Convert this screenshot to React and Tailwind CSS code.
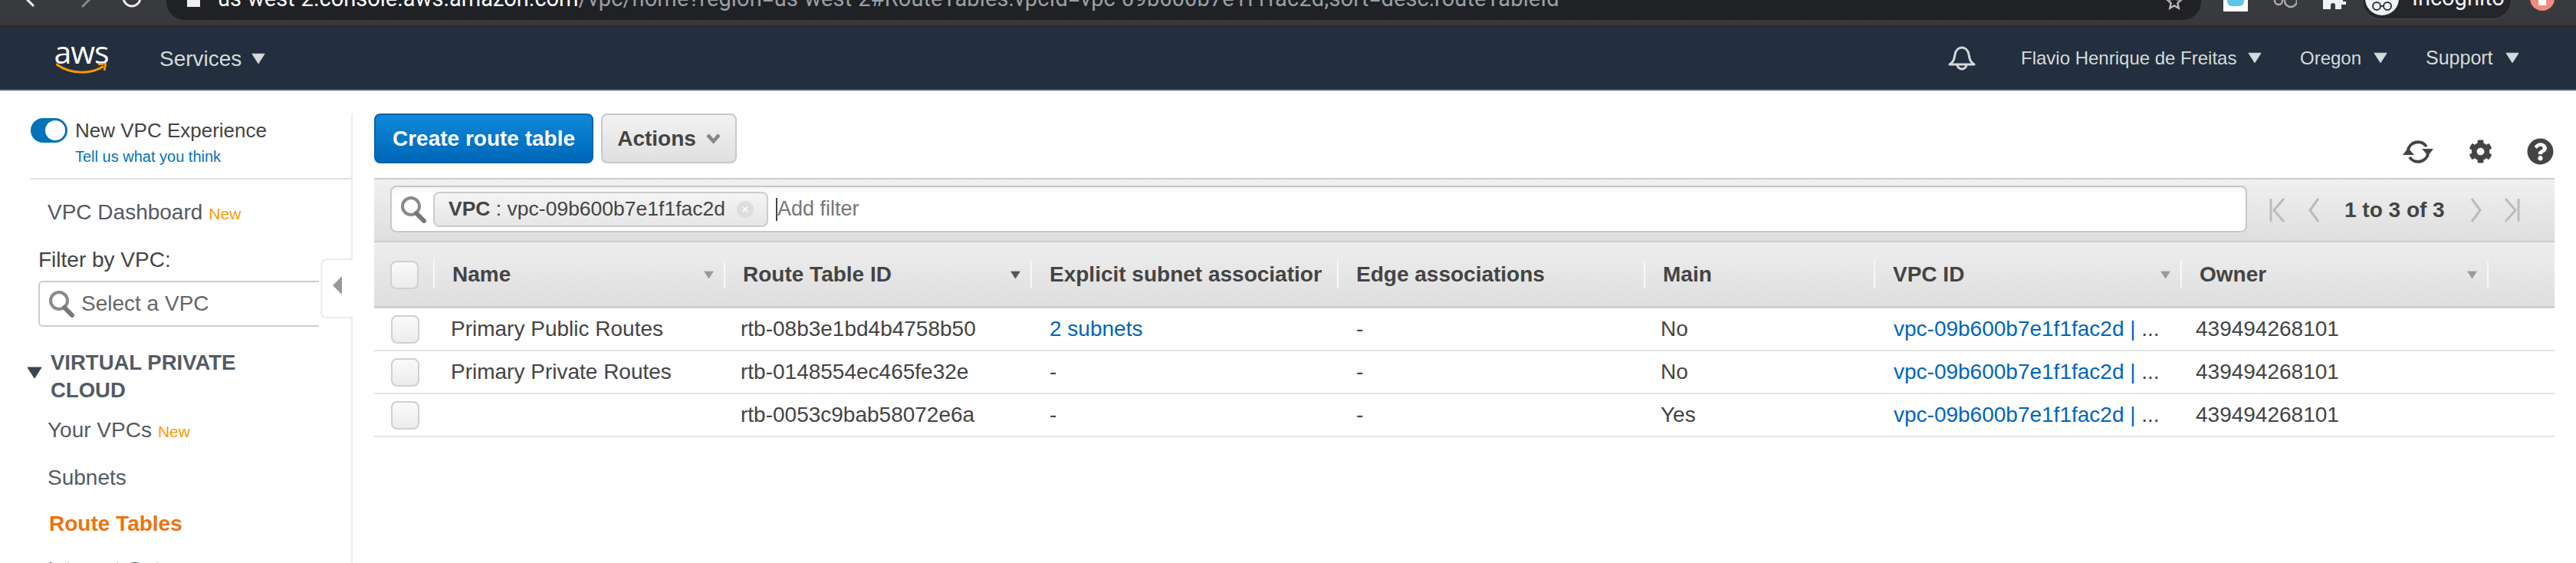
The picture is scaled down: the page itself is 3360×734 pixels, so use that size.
import React from 'react';
import { FaCog, FaQuestionCircle } from 'react-icons/fa';

const gridCols = 'grid grid-cols-[79px_379px_400px_400px_400px_300px_400px_400px_1fr]';

const Caret = ({ className }) => (
  <svg viewBox="0 0 20 16" className={className}>
    <path d="M1 1h18L10 15z" fill="currentColor" stroke="currentColor" strokeLinejoin="round" />
  </svg>
);

const SearchIcon = ({ className }) => (
  <svg viewBox="0 0 36 36" className={className} fill="none">
    <circle cx="15" cy="14" r="11" stroke="#8a8a8a" strokeWidth="4" />
    <path d="M22 23l10 10" stroke="#777" strokeWidth="6" strokeLinecap="round" />
  </svg>
);

const NewBadge = () => <span className="text-[21px] font-normal text-[#ff9900] ml-[8px]">New</span>;

const NavMenu = ({ label, textClass }) => (
  <div className="flex items-center">
    <span className={`text-[#d5dbdb] whitespace-nowrap ${textClass}`}>{label}</span>
    <Caret className="w-[18px] h-[15px] text-[#d5dbdb] ml-[16px]" />
  </div>
);

const Checkbox = ({ className }) => (
  <div className={`w-[37px] h-[37px] rounded-[8px] border-2 border-[#d0d0d0] bg-gradient-to-b from-[#fafafa] to-[#ececec] ${className}`} />
);

const HeaderCell = ({ label, sort, active }) => (
  <div className="h-[36px] border-r-2 border-[#f7f7f7] flex items-center justify-between pl-[23px] pr-[13px] overflow-hidden">
    <span className={`text-[28px] font-bold text-[#444] whitespace-nowrap overflow-hidden ${sort ? '' : 'mr-[7px]'}`}>{label}</span>
    {sort && <Caret className={`w-[13px] h-[13px] shrink-0 ml-2 ${active ? 'text-[#555]' : 'text-[#999]'}`} />}
  </div>
);

const rows = [
  { name: 'Primary Public Routes', id: 'rtb-08b3e1bd4b4758b50', subnets: '2 subnets', main: 'No' },
  { name: 'Primary Private Routes', id: 'rtb-0148554ec465fe32e', subnets: '-', main: 'No' },
  { name: '', id: 'rtb-0053c9bab58072e6a', subnets: '-', main: 'Yes' },
];

const Pager = () => (
  <div className="flex items-center w-[401px] pl-[29px]">
    <svg viewBox="0 0 21 34" className="w-[21px] h-[34px]" fill="none" stroke="#bbb" strokeWidth="3">
      <path d="M2 2v30M19 2L6 17l13 15" />
    </svg>
    <svg viewBox="0 0 16 34" className="w-[16px] h-[34px] ml-[29px]" fill="none" stroke="#bbb" strokeWidth="3">
      <path d="M14 2L3 17l11 15" />
    </svg>
    <span className="text-[28px] font-bold text-[#444] ml-[32px] w-[130px] whitespace-nowrap">1 to 3 of 3</span>
    <svg viewBox="0 0 16 34" className="w-[16px] h-[34px] ml-[34px]" fill="none" stroke="#bbb" strokeWidth="3">
      <path d="M2 2l11 15L2 32" />
    </svg>
    <svg viewBox="0 0 21 34" className="w-[21px] h-[34px] ml-[28px]" fill="none" stroke="#bbb" strokeWidth="3">
      <path d="M19 2v30M2 2l13 15L2 32" />
    </svg>
  </div>
);

export default function App() {
  return (
    <div className="h-[734px] overflow-hidden bg-white font-['Liberation_Sans',Arial,sans-serif]">
      {/* Browser chrome, cut off by the top of the shot */}
      <div className="h-[35px] overflow-hidden bg-gradient-to-b from-[#3a3b40] to-[#37383c] border-b-2 border-[#29292c] flex items-start relative">
        <svg viewBox="0 0 190 12" className="w-[190px] h-[12px] ml-[30px] shrink-0" fill="none" strokeWidth="3">
          <path d="M2 -4L14 8" stroke="#eee" />
          <path d="M77 9L90 -4" stroke="#888" />
          <circle cx="142" cy="-3" r="11" stroke="#eee" />
        </svg>
        <div className="w-[2654px] ml-[-3px] h-[26px] bg-[#202124] rounded-bl-[24px] rounded-br-[24px] flex items-end overflow-hidden relative shrink-0">
          <div className="w-[17px] h-[9px] bg-[#eee] ml-[27px] mb-[17px] shrink-0" />
          <div className="text-[29px] leading-[34px] mt-[-19px] self-start ml-[23px] whitespace-nowrap font-['Roboto',sans-serif]">
            <span className="text-white">us-west-2.console.aws.amazon.com</span>
            <span className="text-[#9aa0a6] tracking-[0.12px]">/vpc/home?region=us-west-2#RouteTables:vpcId=vpc-09b600b7e1f1fac2d;sort=desc:routeTableId</span>
          </div>
          <svg viewBox="0 0 24 24" className="w-[22px] h-[22px] absolute right-[24px] top-[-9px] text-[#bbb]" fill="none" stroke="currentColor" strokeWidth="2.5">
            <path d="M12 2l3 7 7 .6-5.300 4.700 1.600 7.200L12 17.700 5.700 21.500l1.600-7.200L2 9.600 9 9z" />
          </svg>
        </div>
        <div className="w-[32px] h-[15px] bg-white ml-[29px] shrink-0 flex justify-center">
          <div className="w-[22px] h-[8px] bg-[#5cc6e8] rounded-b-[6px]" />
        </div>
        <svg viewBox="0 0 32 12" className="w-[32px] h-[12px] ml-[32px] shrink-0" fill="none" stroke="#aaa" strokeWidth="2.500">
          <circle cx="8" cy="1" r="5" />
          <circle cx="24" cy="1" r="8" />
        </svg>
        <svg viewBox="0 0 30 12" className="w-[30px] h-[12px] ml-[34px] shrink-0" fill="#f1f3f4">
          <path d="M0 -4h26v6h4v4h-6v6H16V7a3 3 0 0 0-6 0v5H0z" />
        </svg>
        <div className="w-[195px] h-[25px] ml-[21px] shrink-0 rounded-b-[24px] bg-[#25262a] border-b border-x border-[#45464a] flex items-start overflow-hidden">
          <div className="w-[44px] h-[44px] rounded-full bg-[#f1f3f4] ml-[3px] mt-[-24px] shrink-0 flex items-end justify-center pb-[6px]">
            <svg viewBox="0 0 28 12" className="w-[28px] h-[12px]" fill="none" stroke="#333" strokeWidth="2">
              <circle cx="7" cy="6" r="5" />
              <circle cx="21" cy="6" r="5" />
              <path d="M12 6h4" />
            </svg>
          </div>
          <span className="text-[29px] leading-[34px] mt-[-20px] ml-[17px] text-[#f1f3f4] font-['Roboto',sans-serif]">Incognito</span>
        </div>
        <div className="w-[32px] h-[32px] rounded-full bg-[#f28b82] ml-[24px] mt-[-18px] shrink-0 flex justify-center">
          <div className="w-[10px] h-[21px] bg-white mt-[4px]" />
        </div>
      </div>

      {/* AWS console nav */}
      <header className="h-[83px] bg-[#232f3e] border-b-2 border-[#4b5560] flex items-center">
        <div className="w-[66px] ml-[73px] mt-[-2px] flex flex-col items-center">
          <span className="text-[41px] leading-[30px] h-[30px] text-white font-['Open_Sans',sans-serif] tracking-[-1px]">aws</span>
          <svg viewBox="0 0 66 16" className="w-[66px] h-[16px]" fill="none">
            <path d="M1 2c18 13 44 13 60 3" stroke="#ff9900" strokeWidth="3" strokeLinecap="round" />
            <path d="M55 2l10-1-2 9" stroke="#ff9900" strokeWidth="2.500" />
          </svg>
        </div>
        <div className="ml-[69px] mt-[2px]">
          <NavMenu label="Services" textClass="text-[28px] w-[104px]" />
        </div>
        <div className="ml-auto flex items-center pr-[74px]">
          <svg viewBox="0 0 36 34" className="w-[36px] h-[34px]" fill="none" stroke="#d5dbdb" strokeWidth="3" strokeLinejoin="round">
            <path d="M2 25c6-4 6-8 7-13 1-6 5-9 9-9s8 3 9 9c1 5 1 9 7 13z" />
            <path d="M12 25a6 6 0 0 0 12 0" />
          </svg>
          <div className="ml-[59px]"><NavMenu label="Flavio Henrique de Freitas" textClass="text-[24px] w-[280px]" /></div>
          <div className="ml-[50px]"><NavMenu label="Oregon" textClass="text-[24px] w-[80px]" /></div>
          <div className="ml-[50px]"><NavMenu label="Support" textClass="text-[25px] w-[88px]" /></div>
        </div>
      </header>

      <div className="flex pt-[30px]">
        {/* Sidebar */}
        <aside className="w-[460px] h-[600px] shrink-0 border-r-2 border-[#eaeded] pl-[40px] relative">
          <div className="h-[86px] border-b-2 border-[#e0e0e0]">
            <div className="flex items-center h-[44px]">
              <div className="w-[48px] h-[32px] rounded-full bg-[#0073bb] flex items-center justify-end pr-[3px]">
                <div className="w-[26px] h-[26px] rounded-full bg-white" />
              </div>
              <span className="text-[26px] text-[#444] ml-[10px]">New VPC Experience</span>
            </div>
            <a className="block text-[20px] text-[#0073bb] ml-[58px] mt-[-3px]">Tell us what you think</a>
          </div>

          <div className="text-[28px] leading-[30px] text-[#545b64] ml-[22px] mt-[28px] flex items-baseline">
            VPC Dashboard<NewBadge />
          </div>
          <div className="text-[28px] leading-[30px] text-[#444] ml-[10px] mt-[30px]">Filter by VPC:</div>
          <div className="w-[366px] h-[60px] ml-[10px] mt-[12px] border-y-2 border-l-2 border-[#ccc] rounded-l-[6px] flex items-center pl-[10px]">
            <SearchIcon className="w-[36px] h-[36px]" />
            <span className="text-[28px] text-[#666] ml-[8px]">Select a VPC</span>
          </div>

          <div className="relative mt-[29px] pl-[26px]">
            <Caret className="absolute left-[-5px] top-[21px] w-[20px] h-[20px] text-[#3b4450]" />
            <div className="text-[27.5px] leading-[36px] font-bold text-[#545b64]">
              VIRTUAL PRIVATE
              <br />
              CLOUD
            </div>
          </div>
          <div className="text-[28px] leading-[30px] text-[#545b64] ml-[22px] mt-[19px] flex items-baseline">
            Your VPCs<NewBadge />
          </div>
          <div className="text-[28px] leading-[30px] text-[#545b64] ml-[22px] mt-[30px]">Subnets</div>
          <div className="text-[28px] leading-[30px] font-bold text-[#ec7211] ml-[24px] mt-[30px]">Route Tables</div>
          <div className="text-[28px] leading-[30px] text-[#545b64] ml-[22px] mt-[30px]">Internet Gateways</div>

          {/* Collapse handle */}
          <div className="absolute left-[418px] top-[189px] w-[42px] h-[78px] bg-white border-2 border-r-0 border-[#eaeded] rounded-l-[8px] flex items-center pl-[14px] pb-[8px]">
            <svg viewBox="0 0 12 24" className="w-[12px] h-[24px]">
              <path d="M12 0v24L0 12z" fill="#999" />
            </svg>
          </div>
        </aside>

        {/* Main panel */}
        <main className="flex-1 pl-[28px] pr-[28px]">
          <div className="flex items-start h-[84px]">
            <button className="w-[286px] h-[65px] rounded-[8px] border-2 border-[#0a62a8] bg-gradient-to-b from-[#0f88d9] to-[#0067b8] text-white text-[28px] font-bold">
              Create route table
            </button>
            <button className="w-[177px] h-[65px] ml-[10px] rounded-[8px] border-2 border-[#c9c9c9] bg-gradient-to-b from-[#f2f2f2] to-[#e0e0e0] text-[#444] text-[28px] font-bold flex items-center justify-center">
              Actions
              <svg viewBox="0 0 20 14" className="w-[19px] h-[13px] ml-[13px]" fill="none" stroke="#888" strokeWidth="5">
                <path d="M2 2l8 9 8-9" />
              </svg>
            </button>
            <div className="ml-auto mr-[1px] flex items-center mt-[32px] text-[#444]">
              <svg viewBox="0 0 42 34" className="w-[42px] h-[34px]" fill="none" stroke="#444" strokeWidth="4">
                <path d="M8 15a13 12 0 0 1 24-5" />
                <path d="M34 19a13 12 0 0 1-24 5" />
                <path d="M26 13h15l-7 9z" fill="#444" stroke="none" />
                <path d="M1 21h15l-8-9z" fill="#444" stroke="none" />
              </svg>
              <FaCog className="w-[31px] h-[31px] ml-[45px]" />
              <FaQuestionCircle className="w-[35px] h-[35px] ml-[45px]" />
            </div>
          </div>

          {/* Filter bar */}
          <div className="h-[84px] border-y-2 border-[#ccc] bg-gradient-to-b from-[#f0f0f0] to-[#dedede] flex items-center pl-[21px]">
            <div className="flex-1 h-[61px] mb-[3px] rounded-[8px] border-2 border-[#c8c8c8] bg-white shadow-[inset_0_4px_6px_rgba(0,0,0,0.05)] flex items-center pl-[10px]">
              <SearchIcon className="w-[36px] h-[36px]" />
              <div className="w-[437px] h-[46px] ml-[8px] rounded-[8px] border-2 border-[#ccc] bg-gradient-to-b from-[#f4f4f4] to-[#e6e6e6] flex items-center pl-[18px]">
                <span className="text-[26.5px] text-[#444] whitespace-nowrap">
                  <b>VPC</b> : vpc-09b600b7e1f1fac2d
                </span>
                <span className="w-[22px] h-[22px] rounded-full bg-[#ddd] text-white text-[18px] leading-[22px] text-center ml-[15px] shrink-0">×</span>
              </div>
              <div className="w-[2px] h-[30px] bg-[#444] ml-[10px]" />
              <span className="text-[27px] text-[#777]">Add filter</span>
            </div>
            <Pager />
          </div>

          {/* Table */}
          <div className={`${gridCols} h-[86px] border-b-[3px] border-[#ccc] bg-gradient-to-b from-[#eeeeee] to-[#dedede] items-start pt-[24px]`}>
            <div className="h-[36px] border-r-2 border-[#f7f7f7] pl-[21px]">
              <Checkbox />
            </div>
            <HeaderCell label="Name" sort />
            <HeaderCell label="Route Table ID" sort active />
            <HeaderCell label="Explicit subnet association" />
            <HeaderCell label="Edge associations" />
            <HeaderCell label="Main" />
            <HeaderCell label="VPC ID" sort />
            <HeaderCell label="Owner" sort />
          </div>
          {rows.map((row) => (
            <div key={row.id} className={`${gridCols} h-[56px] border-b-2 border-[#e3e3e3] items-center text-[28px] text-[#444]`}>
              <div className="pl-[22px]"><Checkbox /></div>
              <div className="pl-[21px] whitespace-nowrap">{row.name}</div>
              <div className="pl-[20px] whitespace-nowrap">{row.id}</div>
              <div className={`pl-[23px] ${row.subnets === '-' ? '' : 'text-[#0066bb]'}`}>{row.subnets}</div>
              <div className="pl-[23px]">-</div>
              <div className="pl-[20px]">{row.main}</div>
              <div className="pl-[24px] whitespace-nowrap overflow-hidden">
                <span className="text-[#0066bb]">vpc-09b600b7e1f1fac2d | </span>...
              </div>
              <div className="pl-[18px]">439494268101</div>
              <div />
            </div>
          ))}
        </main>
      </div>
    </div>
  );
}
